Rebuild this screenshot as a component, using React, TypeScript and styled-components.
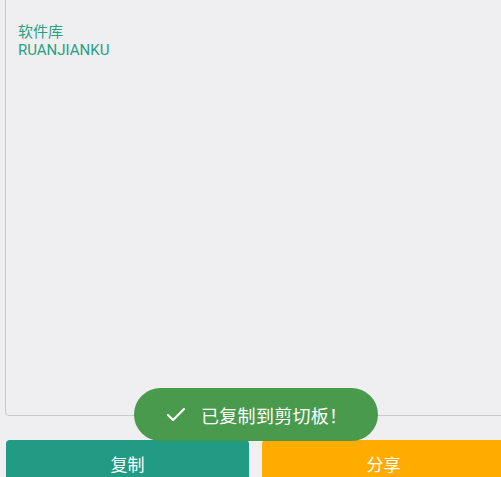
import styled, { createGlobalStyle } from 'styled-components';

const GlobalStyle = createGlobalStyle`
  html, body {
    margin: 0;
    padding: 0;
    background: #efeff1;
    overflow: hidden;
  }
  body {
    font-family: Roboto, "Noto Sans CJK SC", sans-serif;
  }
`;

const Page = styled.div`
  position: relative;
  width: 512px;
  height: 477px;
  overflow: hidden;
  background: #efeff1;
`;

const Editor = styled.div`
  margin: -6px 0 0 5px;
  height: 422px;
  box-sizing: border-box;
  border: 1px solid #c9c9cb;
  border-radius: 4px;
  padding: 28px 12px;
  color: #27a084;
  font-size: 15px;
  line-height: 18px;
`;

const Line = styled.div`
  white-space: nowrap;
`;

const Actions = styled.div`
  display: flex;
  gap: 13px;
  margin: 24px 0 0 6px;
`;

const ActionButton = styled.button<{ $tone: string }>`
  width: 243px;
  height: 50px;
  border: none;
  border-radius: 4px 4px 0 0;
  background: ${(p) => p.$tone};
  color: #fff;
  font-family: Roboto, "Noto Sans CJK SC", sans-serif;
  font-size: 17px;
  padding: 0 0 4px;
  cursor: pointer;
`;

const Toast = styled.div`
  position: absolute;
  left: 134px;
  top: 388px;
  width: 244px;
  height: 53px;
  box-sizing: border-box;
  border-radius: 27px;
  background: rgba(68, 151, 71, 0.97);
  display: flex;
  align-items: center;
  padding-left: 30px;
  gap: 13px;
  color: #fff;
  font-size: 18px;
  letter-spacing: 0.3px;
`;

const Check = () => (
  <svg width="24" height="24" viewBox="0 0 24 24" fill="none" stroke="#fff" strokeWidth="2.1" strokeLinecap="round" strokeLinejoin="round">
    <path d="M20 6 9 17l-5-5" />
  </svg>
);

export default function App() {
  return (
    <Page>
      <GlobalStyle />
      <Editor>
        <Line>软件库</Line>
        <Line>RUANJIANKU</Line>
      </Editor>
      <Actions>
        <ActionButton $tone="#219b84">复制</ActionButton>
        <ActionButton $tone="#ffab00">分享</ActionButton>
      </Actions>
      <Toast>
        <Check />
        <span>已复制到剪切板！</span>
      </Toast>
    </Page>
  );
}
